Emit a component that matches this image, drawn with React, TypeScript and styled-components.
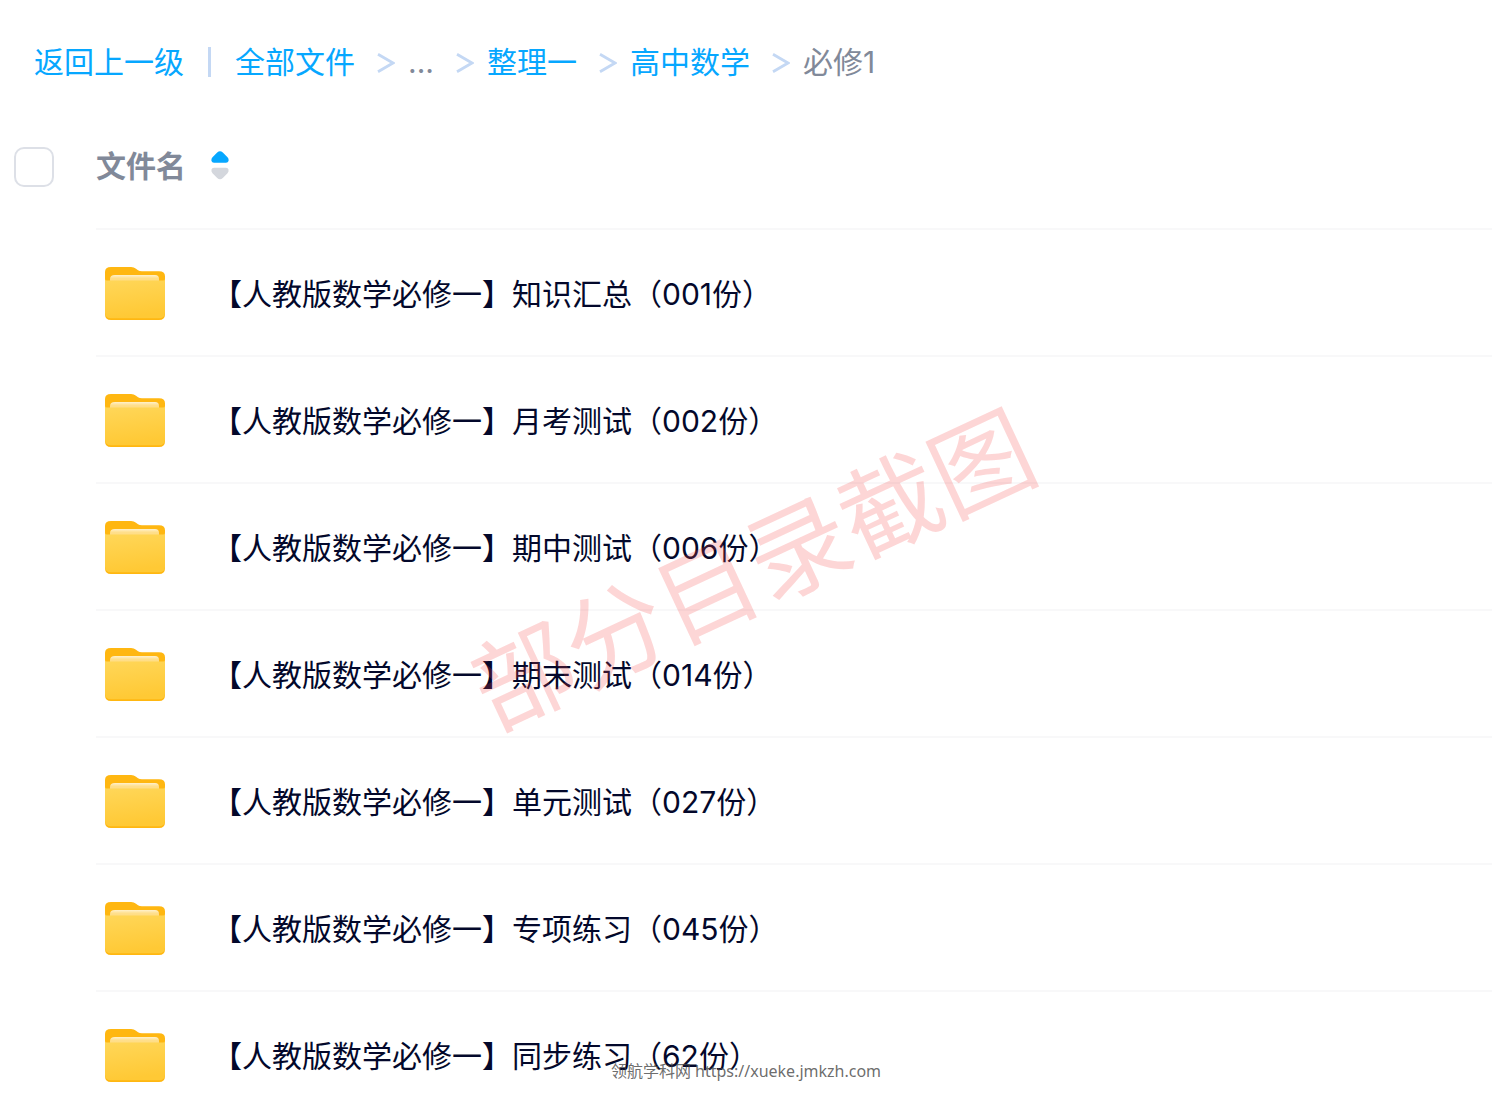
import React from "react";
import styled, { createGlobalStyle } from "styled-components";

const Global = createGlobalStyle`
  * { box-sizing: border-box; }
  body {
    margin: 0;
    background: #fff;
    font-family: Inter, "Noto Sans CJK SC", sans-serif;
    font-size: 30px;
    line-height: 40px;
    color: #03082b;
  }
`;

const Page = styled.main`
  position: relative;
  height: 100vh;
  overflow: hidden;
`;

const Breadcrumb = styled.nav`
  display: flex;
  align-items: center;
  height: 104px;
  padding: 20px 34px 0;
  white-space: nowrap;
`;

const CrumbLink = styled.a`
  color: #06a7ff;
  text-decoration: none;
`;

const Divider = styled.span`
  width: 3px;
  height: 30px;
  margin: 0 24px;
  background: #c4d8f4;
`;

const Arrow = styled.svg`
  width: 18px;
  height: 22px;
  margin: 0 13px 0 22px;
  fill: none;
  stroke: #c4d8f4;
  stroke-width: 2.8;
`;

const Current = styled.span`
  color: #818999;
`;

const FileTable = styled.table`
  width: 100%;
  border-collapse: separate;
  border-spacing: 0;
  table-layout: fixed;
`;

const CheckColumn = styled.col`
  width: 96px;
`;

const HeadCheck = styled.th`
  height: 126px;
  padding: 0 0 0 14px;
  text-align: left;
`;

const Checkbox = styled.input`
  appearance: none;
  display: block;
  width: 40px;
  height: 40px;
  margin: 0;
  border: 2px solid #dde0e7;
  border-radius: 10px;
  background: #fff;
`;

const HeadName = styled.th`
  padding: 0;
  border-bottom: 2px solid #f8f8f9;
  color: #818999;
  font-weight: 700;
  text-align: left;
`;

const SortButton = styled.button`
  display: flex;
  align-items: center;
  gap: 25px;
  padding: 0;
  border: 0;
  background: none;
  color: inherit;
  font: inherit;
`;

const SortIcon = styled.svg`
  width: 18px;
  height: 30px;
`;

const CheckCell = styled.td`
  height: 127px;
  padding: 0;
`;

const NameCell = styled.td`
  padding: 2px 0 0 8px;
  border-bottom: 2px solid #f8f8f9;
`;

const FileEntry = styled.div`
  display: flex;
  align-items: center;
  gap: 46px;
`;

const FolderSvg = styled.svg`
  flex: none;
  width: 62px;
  height: 56px;
`;

const FileLink = styled.a`
  color: #03082b;
  text-decoration: none;
  white-space: nowrap;
`;

const Watermark = styled.div`
  position: absolute;
  top: 570px;
  left: 753px;
  transform: translate(-50%, -50%) rotate(-25deg);
  color: rgba(245, 70, 70, 0.22);
  font-size: 101px;
  line-height: 120px;
  white-space: nowrap;
  pointer-events: none;
`;

const SiteMark = styled.div`
  position: absolute;
  right: 0;
  bottom: 30px;
  left: 0;
  color: rgba(70, 70, 70, 0.8);
  font-family: "Noto Sans", "Noto Sans CJK SC", sans-serif;
  font-size: 16px;
  line-height: 24px;
  text-align: center;
  pointer-events: none;
`;

const ArrowIcon = () => (
  <Arrow viewBox="0 0 18 22" aria-hidden="true">
    <path d="M1 3.200 16 12 1 20.800" />
  </Arrow>
);

const FolderIcon = () => (
  <FolderSvg viewBox="0 0 62 56" aria-hidden="true">
    <defs>
      <linearGradient id="folderFront" x1="0" y1="0" x2="0.2" y2="1">
        <stop offset="0" stopColor="#ffd75a" />
        <stop offset="1" stopColor="#ffc935" />
      </linearGradient>
      <linearGradient id="folderPaper" x1="0" y1="0" x2="0" y2="1">
        <stop offset="0" stopColor="#fff1cd" />
        <stop offset="0.4" stopColor="#ffdf8c" />
        <stop offset="1" stopColor="#ffdb7c" />
      </linearGradient>
    </defs>
    <path fill="#ffb711" d="M1 6q0-5 6-5h20q3 0 5 1.700l2 1.600q1.500 1 4 1h17q6 0 6 5v37.700q0 6-6 6H7q-6 0-6-6z" />
    <path fill="url(#folderPaper)" d="M6 17v-4q0-4 5-4h40q4 0 4 4v4z" />
    <path fill="url(#folderFront)" d="M1 13q0 1.500 2 1.500h56q2 0 2-1.500v33.500q0 5.800-6 5.800H7q-6 0-6-5.800z" />
  </FolderSvg>
);

const files = [
  "【人教版数学必修一】知识汇总（001份）",
  "【人教版数学必修一】月考测试（002份）",
  "【人教版数学必修一】期中测试（006份）",
  "【人教版数学必修一】期末测试（014份）",
  "【人教版数学必修一】单元测试（027份）",
  "【人教版数学必修一】专项练习（045份）",
  "【人教版数学必修一】同步练习（62份）",
];

export default function App() {
  return (
    <Page lang="zh-CN">
      <Global />
      <Breadcrumb>
        <CrumbLink href="#up">返回上一级</CrumbLink>
        <Divider />
        <CrumbLink href="#all">全部文件</CrumbLink>
        <ArrowIcon />
        <Current>...</Current>
        <ArrowIcon />
        <CrumbLink href="#set">整理一</CrumbLink>
        <ArrowIcon />
        <CrumbLink href="#math">高中数学</CrumbLink>
        <ArrowIcon />
        <Current>必修1</Current>
      </Breadcrumb>
      <FileTable>
        <colgroup>
          <CheckColumn />
          <col />
        </colgroup>
        <thead>
          <tr>
            <HeadCheck>
              <Checkbox type="checkbox" aria-label="全选" />
            </HeadCheck>
            <HeadName>
              <SortButton type="button">
                文件名
                <SortIcon viewBox="0 0 18 30" aria-hidden="true">
                  <path fill="#06a7ff" d="M6.200 1.500q2.800-2.500 5.600 0l4.700 4.800q1.500 1.700 1 3.700-.4 1.800-2.500 1.800H3Q.9 11.800.5 10 0 8 1.500 6.300z" />
                  <path fill="#d4d7dd" d="M6.200 27q2.800 2.500 5.600 0l4.700-4.800q1.500-1.700 1-3.700-.4-1.800-2.500-1.800H3Q.9 16.700.5 18.500 0 20.500 1.500 22.200z" />
                </SortIcon>
              </SortButton>
            </HeadName>
          </tr>
        </thead>
        <tbody>
          {files.map((name) => (
            <tr key={name}>
              <CheckCell />
              <NameCell>
                <FileEntry>
                  <FolderIcon />
                  <FileLink href="#folder">{name}</FileLink>
                </FileEntry>
              </NameCell>
            </tr>
          ))}
        </tbody>
      </FileTable>
      <Watermark>部分目录截图</Watermark>
      <SiteMark>领航学科网 https://xueke.jmkzh.com</SiteMark>
    </Page>
  );
}
